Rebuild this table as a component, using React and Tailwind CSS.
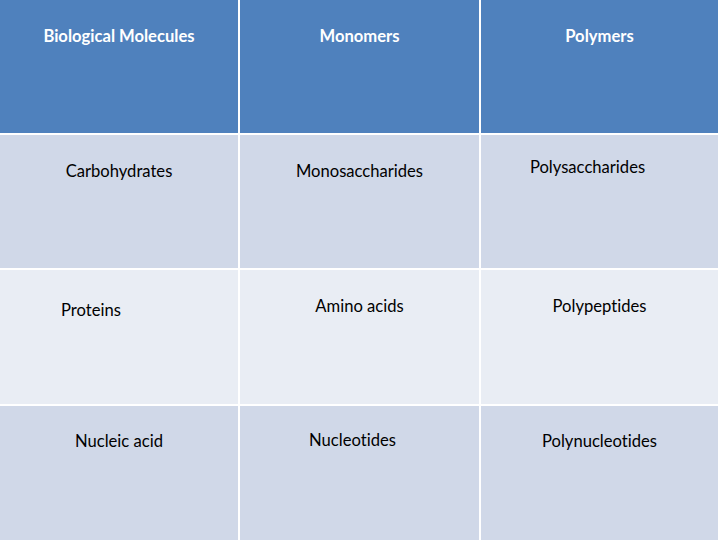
import React from "react";

const rows = [
  {
    bg: "bg-[#d0d8e8]",
    cells: [
      { text: "Carbohydrates", cls: "pt-[26px]" },
      { text: "Monosaccharides", cls: "pt-[26px]" },
      { text: "Polysaccharides", cls: "pt-[22px] pr-[24px]" },
    ],
  },
  {
    bg: "bg-[#e9edf4]",
    cells: [
      { text: "Proteins", cls: "pt-[30px] pr-[56px]" },
      { text: "Amino acids", cls: "pt-[26px]" },
      { text: "Polypeptides", cls: "pt-[26px]" },
    ],
  },
  {
    bg: "bg-[#d0d8e8]",
    cells: [
      { text: "Nucleic acid", cls: "pt-[25px]" },
      { text: "Nucleotides", cls: "pt-[24px] pr-[14px]" },
      { text: "Polynucleotides", cls: "pt-[25px]" },
    ],
  },
];

const App = () => {
  return (
    <div
      className="w-[720px] h-[540px] bg-white pr-[2px] overflow-hidden"
      style={{ fontFamily: "Lato, 'Open Sans', sans-serif" }}
    >
      <div className="grid grid-cols-[238px_239px_237px] grid-rows-[133px_133px_134px_134px] gap-[2px] text-[16.6px] leading-[20px] text-black [font-variant-ligatures:none]">
        {/* header */}
        {["Biological Molecules", "Monomers", "Polymers"].map((h) => (
          <div
            key={h}
            className="bg-[#4f81bd] text-white font-bold text-center pt-[26px]"
          >
            {h}
          </div>
        ))}
        {rows.map((r, i) =>
          r.cells.map((c, j) => (
            <div key={i + "-" + j} className={`${r.bg} text-center ${c.cls}`}>
              {c.text}
            </div>
          ))
        )}
      </div>
    </div>
  );
};

export default App;
